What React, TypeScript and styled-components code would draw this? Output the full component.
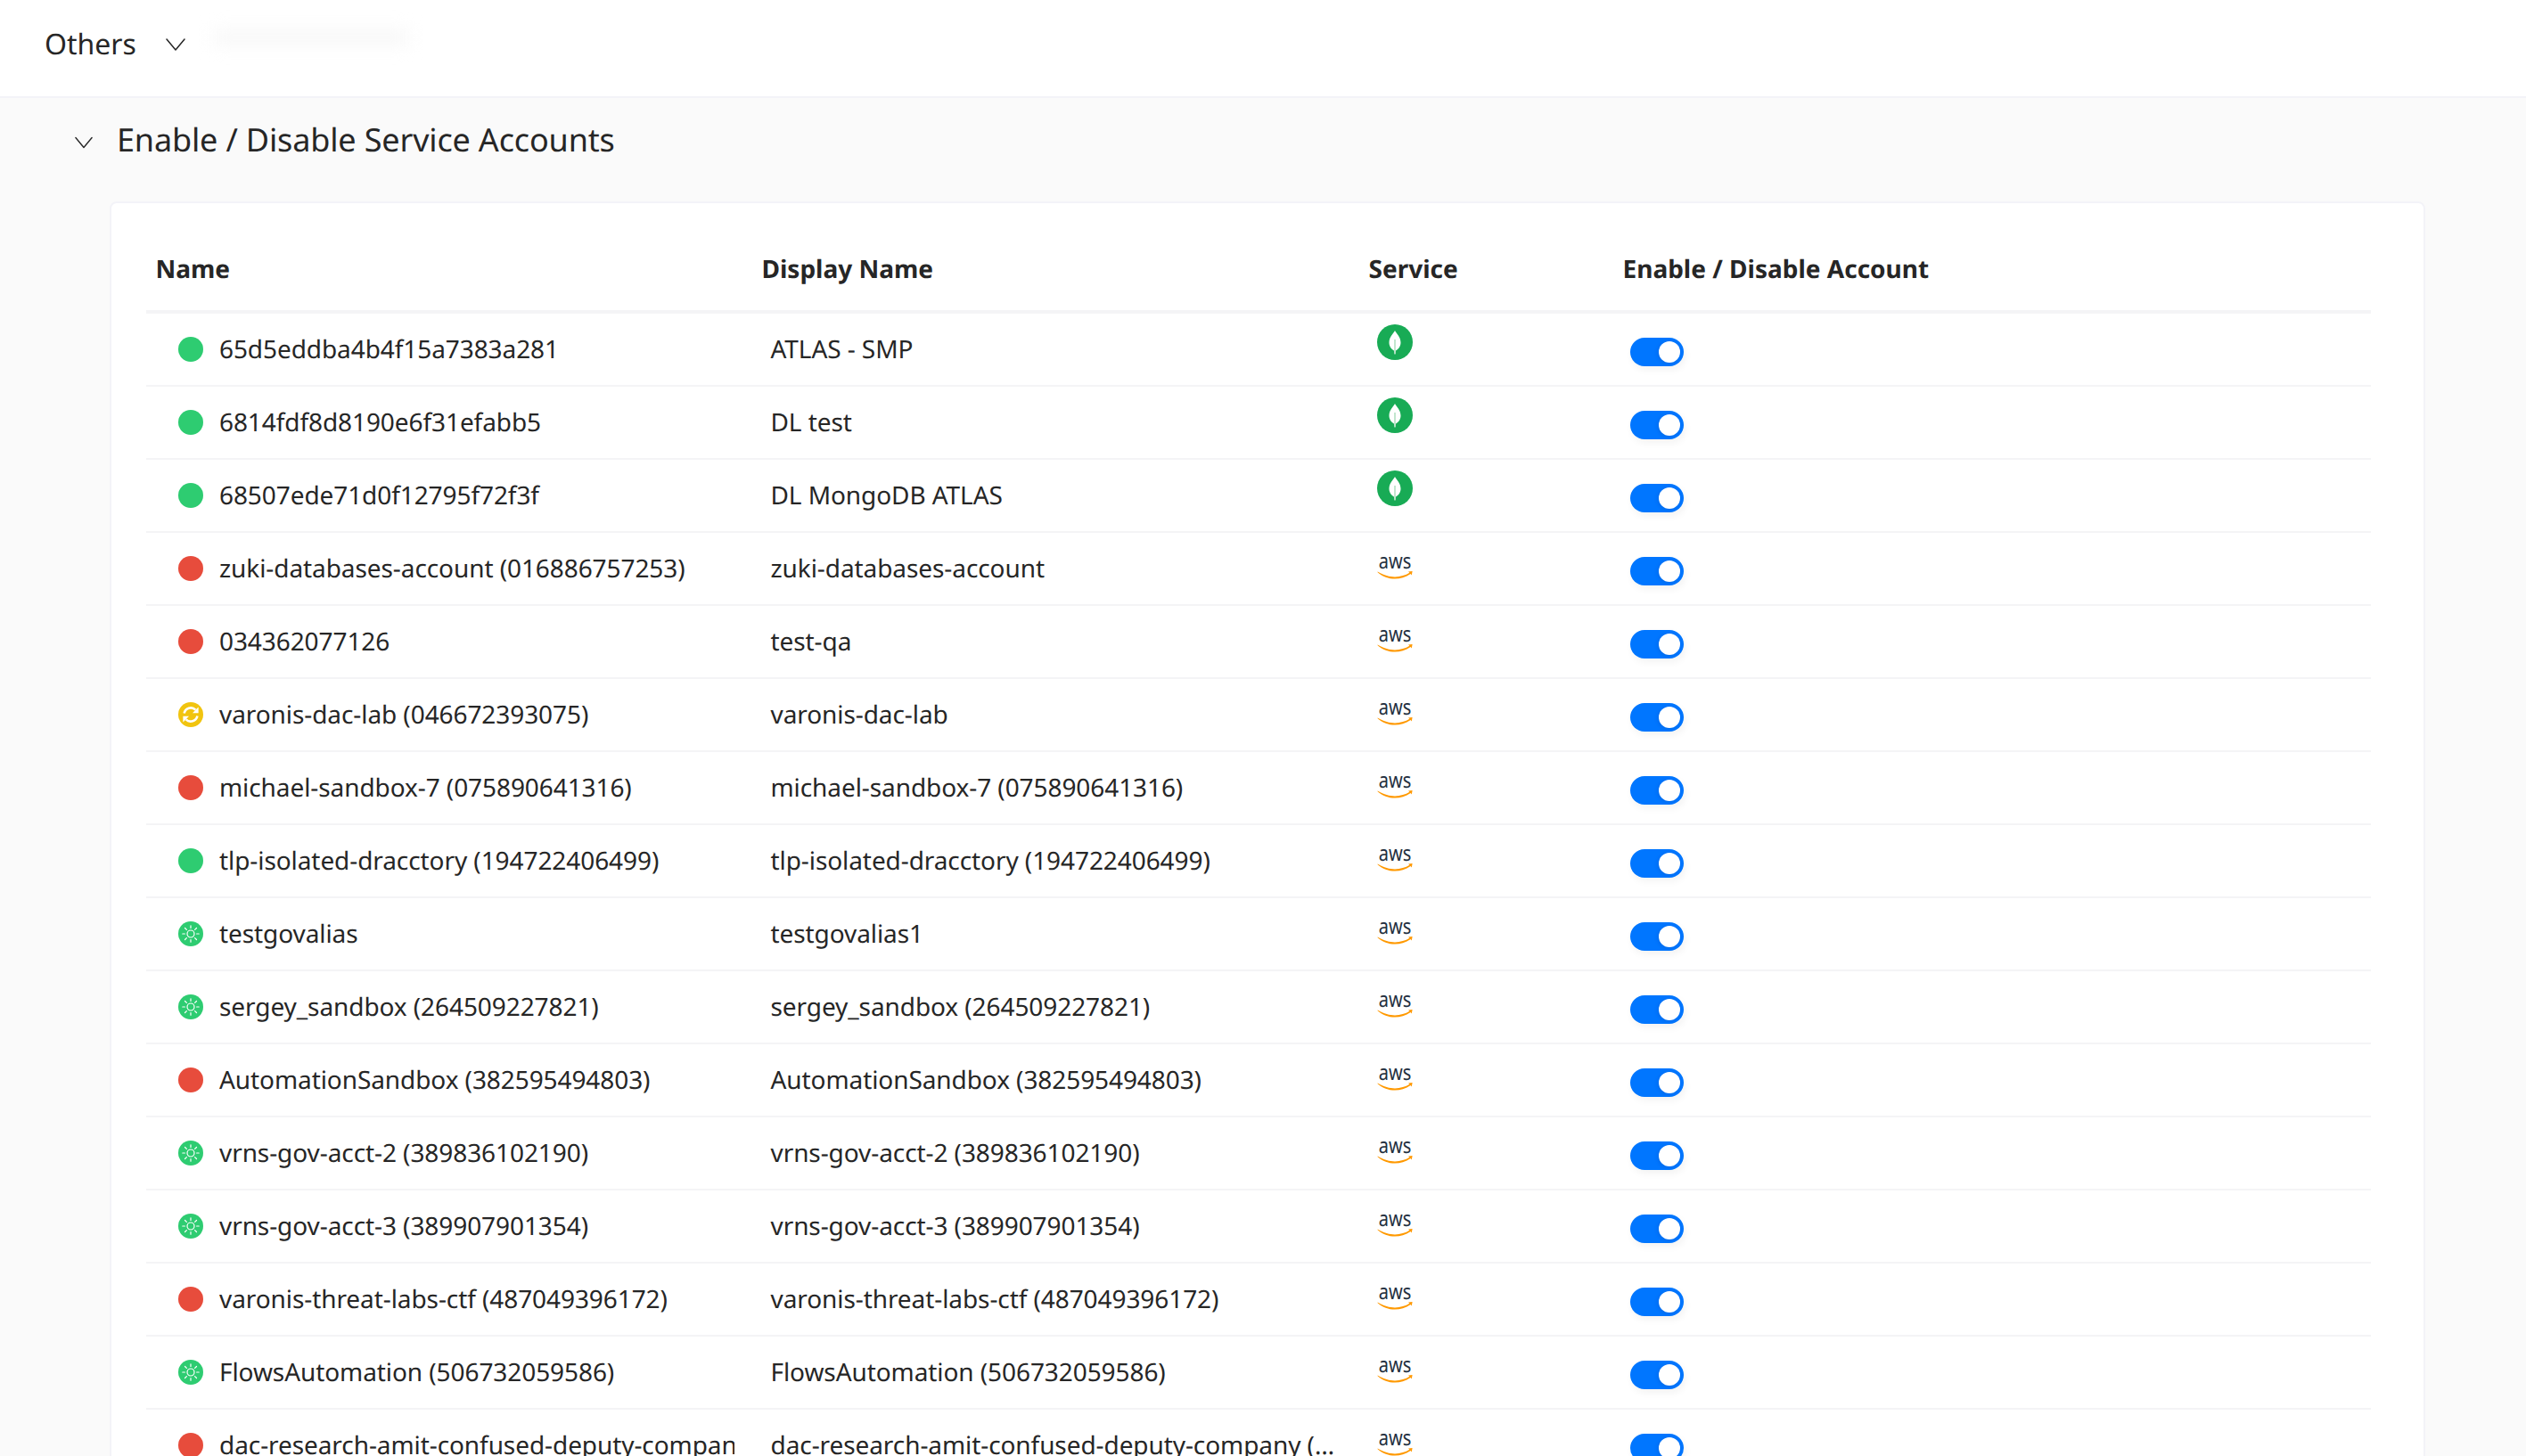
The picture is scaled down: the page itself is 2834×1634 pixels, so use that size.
import React from "react";
import styled, { createGlobalStyle } from "styled-components";

const Global = createGlobalStyle`
  html, body { margin: 0; padding: 0; height: 1634px; overflow: hidden; background: #fafafa; }
  body { font-family: "Noto Sans", "Open Sans", sans-serif; color: #262626; text-rendering: geometricPrecision; }
  * { box-sizing: border-box; }
`;

const Page = styled.div`
  width: 2834px;
  height: 1634px;
  overflow: hidden;
  background: #fafafa;
`;

const TopBar = styled.header`
  height: 110px;
  background: #fff;
  border-bottom: 2px solid #f3f3f8;
  padding: 0 0 8px 50px;
  display: flex;
  align-items: center;
  gap: 33px;
`;

const TopLabel = styled.span`
  font-size: 32px;
  line-height: 44px;
`;

const Smudge = styled.span`
  width: 220px;
  height: 18px;
  margin: 0 0 16px -2px;
  background: #f8f8f8;
  filter: blur(9px);
`;

const Section = styled.section`
  display: flex;
  align-items: center;
  gap: 27px;
  height: 116px;
  padding: 0 0 22px 84px;
`;

const Title = styled.h2`
  margin: 0;
  font-size: 36px;
  line-height: 50px;
  font-weight: 400;
  letter-spacing: -0.16px;
`;

const ChevronBox = styled.svg<{ $drop?: number }>`
  flex: none;
  margin-top: ${(p) => p.$drop ?? 0}px;
`;

const Card = styled.div`
  margin: 0 113px 0 123px;
  padding: 28px 59px 0 39px;
  background: #fff;
  border: 2px solid #f3f3f8;
  border-radius: 8px;
`;

const Grid = styled.div`
  display: grid;
  grid-template-columns: 680px 681px 285px 1fr;
`;

const HeadRow = styled(Grid)`
  height: 96px;
  border-bottom: 4px solid #f4f4f6;
  align-items: center;
`;

const HeadCell = styled.div`
  padding-left: 10.5px;
  font-size: 28px;
  font-weight: 700;
  line-height: 40px;
`;

const Row = styled(Grid)`
  height: 82px;
  border-bottom: 2px solid #f4f4f6;
`;

const NameCell = styled.div`
  display: flex;
  align-items: center;
  gap: 18px;
  padding: 0 20px 0 36px;
  height: 80px;
  min-width: 0;
`;

const ClippedName = styled.div`
  flex: 1;
  min-width: 0;
  overflow: hidden;
  font-size: 28px;
  line-height: 40px;
  letter-spacing: -0.08px;
  white-space: nowrap;
`;

const DisplayCell = styled.div`
  height: 80px;
  padding: 0 20px 0 20.5px;
  font-size: 28px;
  line-height: 80px;
  letter-spacing: -0.08px;
  white-space: nowrap;
  overflow: hidden;
  text-overflow: ellipsis;
`;

const ServiceCell = styled.div`
  padding: 12px 0 0 20px;
  height: 80px;
`;

const ToggleCell = styled.div`
  padding: 27px 0 0 19px;
  height: 80px;
`;

const ToggleTrack = styled.div`
  width: 60px;
  height: 32px;
  padding: 4px 4px 4px 0;
  border-radius: 16px;
  background: #0076ff;
  display: flex;
  justify-content: flex-end;
  box-shadow: 2px 4px 8px rgba(0, 0, 0, 0.05);
`;

const Knob = styled.div`
  width: 24px;
  height: 24px;
  border-radius: 50%;
  background: #fff;
  box-shadow: -1px 1px 4px rgba(0, 40, 110, 0.15);
`;

const Chevron = ({ size, drop }: { size: number; drop?: number }) => (
  <ChevronBox $drop={drop} width={size} height={size} viewBox="0 0 22 22" fill="none" stroke="#262626" strokeWidth="1.5" strokeLinecap="round" strokeLinejoin="round">
    <path d="M1 5l10 12L21 5" />
  </ChevronBox>
);

type Status = "green" | "red" | "sync" | "sun";

const StatusGlyph = styled.svg`
  flex: none;
`;

const StatusIcon = ({ status }: { status: Status }) => {
  if (status === "green" || status === "red") {
    return (
      <StatusGlyph width="28" height="28" viewBox="0 0 28 28">
        <circle cx="14" cy="14" r="14" fill={status === "green" ? "#2ecc71" : "#e74c3c"} />
      </StatusGlyph>
    );
  }
  if (status === "sync") {
    return (
      <StatusGlyph width="28" height="28" viewBox="0 0 28 28">
        <circle cx="14" cy="14" r="14" fill="#f1c40f" />
        <g fill="none" stroke="#fff" strokeWidth="2.6">
          <path d="M6.6 12.6A7.6 7.6 0 0 1 19.4 8.6" />
          <path d="M21.4 15.4A7.6 7.6 0 0 1 8.6 19.4" />
        </g>
        <path d="M22.6 5.6v6.6H16z" fill="#fff" />
        <path d="M5.4 22.400v-6.600H12z" fill="#fff" />
      </StatusGlyph>
    );
  }
  return (
    <StatusGlyph width="28" height="28" viewBox="0 0 28 28">
      <circle cx="14" cy="14" r="14" fill="#2ecc71" />
      <g fill="none" stroke="#fff" strokeWidth="1.2" strokeLinecap="round">
        <circle cx="14" cy="14" r="4" />
        <path d="M14 4.800v2.600M14 20.600v2.600M4.800 14h2.600M20.600 14h2.600M7.500 7.500l1.900 1.900M18.600 18.600l1.900 1.900M20.500 7.500l-1.900 1.900M9.400 18.600l-1.900 1.900" />
      </g>
    </StatusGlyph>
  );
};

const MongoIcon = () => (
  <svg width="40" height="40" viewBox="0 0 40 40">
    <circle cx="20" cy="20" r="20" fill="#18ab55" />
    <path d="M20 7C18.500 10 13.500 14 13.500 20.500C13.500 25.500 17 28.300 19 29.500L19.500 33.500h1l.5-4C23 28.300 26.500 25.500 26.500 20.500C26.500 14 21.500 10 20 7z" fill="#fff" />
    <path d="M19.300 17h1.400v16h-1.400z" fill="#a8dcb9" />
  </svg>
);

const AwsIcon = () => (
  <svg width="40" height="40" viewBox="0 0 40 40">
    <text transform="translate(1.800 28) scale(1 1.200)" fontFamily="Noto Sans, sans-serif" fontSize="20" fill="#232f3e">aws</text>
    <path d="M.6 31.600C8 36 14 37.400 20 37.400C26 37.400 32 35.600 36.400 32.800L35 31.600L39.600 31L38.800 35.600L37.600 34C32 38 26 39.600 20 39.600C13 39.600 6 37 .6 32.200z" fill="#ff9900" />
  </svg>
);

type Account = { name: string; display?: string; status: Status; service: "mongo" | "aws" };

const accounts: Account[] = [
  { name: "65d5eddba4b4f15a7383a281", display: "ATLAS - SMP", status: "green", service: "mongo" },
  { name: "6814fdf8d8190e6f31efabb5", display: "DL test", status: "green", service: "mongo" },
  { name: "68507ede71d0f12795f72f3f", display: "DL MongoDB ATLAS", status: "green", service: "mongo" },
  { name: "zuki-databases-account (016886757253)", display: "zuki-databases-account", status: "red", service: "aws" },
  { name: "034362077126", display: "test-qa", status: "red", service: "aws" },
  { name: "varonis-dac-lab (046672393075)", display: "varonis-dac-lab", status: "sync", service: "aws" },
  { name: "michael-sandbox-7 (075890641316)", status: "red", service: "aws" },
  { name: "tlp-isolated-dracctory (194722406499)", status: "green", service: "aws" },
  { name: "testgovalias", display: "testgovalias1", status: "sun", service: "aws" },
  { name: "sergey_sandbox (264509227821)", status: "sun", service: "aws" },
  { name: "AutomationSandbox (382595494803)", status: "red", service: "aws" },
  { name: "vrns-gov-acct-2 (389836102190)", status: "sun", service: "aws" },
  { name: "vrns-gov-acct-3 (389907901354)", status: "sun", service: "aws" },
  { name: "varonis-threat-labs-ctf (487049396172)", status: "red", service: "aws" },
  { name: "FlowsAutomation (506732059586)", status: "sun", service: "aws" },
  { name: "dac-research-amit-confused-deputy-company (530000000000)", status: "red", service: "aws" },
];

export default function App() {
  return (
    <Page>
      <Global />
      <TopBar>
        <TopLabel>Others</TopLabel>
        <Chevron size={22} />
        <Smudge />
      </TopBar>
      <Section>
        <Chevron size={20} drop={6} />
        <Title>Enable / Disable Service Accounts</Title>
      </Section>
      <Card>
        <HeadRow>
          <HeadCell>Name</HeadCell>
          <HeadCell>Display Name</HeadCell>
          <HeadCell>Service</HeadCell>
          <HeadCell>Enable / Disable Account</HeadCell>
        </HeadRow>
        {accounts.map((a) => (
          <Row key={a.name}>
            <NameCell>
              <StatusIcon status={a.status} />
              <ClippedName>{a.name}</ClippedName>
            </NameCell>
            <DisplayCell>{a.display ?? a.name}</DisplayCell>
            <ServiceCell>{a.service === "mongo" ? <MongoIcon /> : <AwsIcon />}</ServiceCell>
            <ToggleCell>
              <ToggleTrack>
                <Knob />
              </ToggleTrack>
            </ToggleCell>
          </Row>
        ))}
      </Card>
    </Page>
  );
}
